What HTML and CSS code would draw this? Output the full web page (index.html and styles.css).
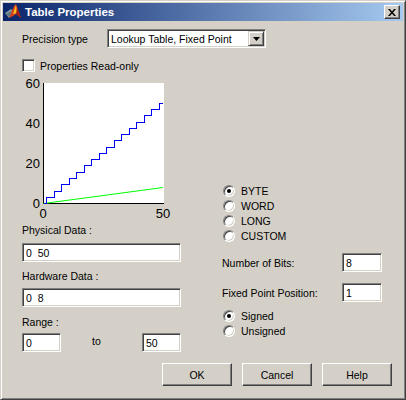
FILE: index.html
```html
<!DOCTYPE html>
<html>
<head>
<meta charset="utf-8">
<link rel="stylesheet" href="styles.css">
</head>
<body>
<div class="window">
  <div class="titlebar">
    <svg class="app-icon" width="16" height="16" viewBox="0 0 16 16">
      <polygon points="0,9 6,5 10,8 4,14" fill="#8a9aa0"/>
      <polygon points="1,10 6,7 8,9 4,13" fill="#5f7a86"/>
      <polygon points="4,14 9,2 11,0 16,14 11,10 8,12" fill="#d8401a"/>
      <polygon points="8,10 11,1 12,9" fill="#f8c020"/>
      <polygon points="11,10 12,4 16,14" fill="#a02010"/>
    </svg>
    <span class="title">Table Properties</span>
    <span class="close">
      <svg width="8" height="7" viewBox="0 0 8 7"><path d="M0 0h2l2 2.5 2-2.5h2L5 3.5 8 7H6L4 4.5 2 7H0l3-3.5z" fill="#000"/></svg>
    </span>
  </div>
  <div class="body">
    <div class="precision-row">
      <span class="precision-lbl">Precision type</span>
      <div class="combo">
        <span class="combo-text">Lookup Table, Fixed Point</span>
        <span class="combo-btn"><svg width="7" height="4" viewBox="0 0 7 4"><path d="M0 0h7L3.5 4z" fill="#000"/></svg></span>
      </div>
    </div>
    <div class="check-row"><span class="checkbox"></span><span class="check-text">Properties Read-only</span></div>
    <div class="main">
      <div class="left">
        <svg class="plot" width="150" height="145" viewBox="0 0 150 145">
          <rect x="21" y="8" width="121" height="121" fill="#fff"/>
          <path d="M21.5 8V129M21 128.5H142" stroke="#000" stroke-width="1" fill="none" shape-rendering="crispEdges"/>
          <polyline fill="none" stroke="#00ff00" stroke-width="1" points="21.5,128.5 141,112.5"/>
          <polyline fill="none" stroke="#0000ff" stroke-width="1" shape-rendering="crispEdges" points="21.5,128.5 24.5,128.5 24.5,122.5 32.5,122.5 32.5,116.5 39.5,116.5 39.5,109.5 47.5,109.5 47.5,103.5 54.5,103.5 54.5,97.5 62.5,97.5 62.5,90.5 69.5,90.5 69.5,84.5 77.5,84.5 77.5,78.5 84.5,78.5 84.5,72.5 92.5,72.5 92.5,65.5 99.5,65.5 99.5,59.5 107.5,59.5 107.5,53.5 114.5,53.5 114.5,47.5 122.5,47.5 122.5,40.5 129.5,40.5 129.5,34.5 137.5,34.5 137.5,28.5 141,28.5"/>
          <g class="ticks" text-anchor="end">
            <text x="18" y="13">60</text>
            <text x="18" y="53">40</text>
            <text x="18" y="93">20</text>
            <text x="18" y="133">0</text>
          </g>
          <g class="ticks" text-anchor="middle">
            <text x="21" y="143">0</text>
            <text x="141" y="143">50</text>
          </g>
        </svg>
        <div class="field-label first">Physical Data :</div>
        <div class="textbox wide gap-a">0  50</div>
        <div class="field-label gap-b">Hardware Data :</div>
        <div class="textbox wide gap-c">0  8</div>
        <div class="field-label gap-d">Range :</div>
        <div class="range-row">
          <div class="textbox small">0</div>
          <span class="to">to</span>
          <div class="textbox small push">50</div>
        </div>
      </div>
      <div class="right">
        <div class="radio-group size-group">
          <div class="radio-row"><span class="radio checked"></span><span class="radio-text">BYTE</span></div>
          <div class="radio-row"><span class="radio"></span><span class="radio-text">WORD</span></div>
          <div class="radio-row"><span class="radio"></span><span class="radio-text">LONG</span></div>
          <div class="radio-row"><span class="radio"></span><span class="radio-text">CUSTOM</span></div>
        </div>
        <div class="num-row bits-row">
          <span class="num-label">Number of Bits:</span>
          <div class="textbox num">8</div>
        </div>
        <div class="num-row fixed-row">
          <span class="num-label">Fixed Point Position:</span>
          <div class="textbox num">1</div>
        </div>
        <div class="radio-group sign-group">
          <div class="radio-row"><span class="radio checked"></span><span class="radio-text">Signed</span></div>
          <div class="radio-row"><span class="radio"></span><span class="radio-text">Unsigned</span></div>
        </div>
      </div>
    </div>
    <div class="buttons">
      <span class="btn">OK</span>
      <span class="btn">Cancel</span>
      <span class="btn">Help</span>
    </div>
  </div>
</div>
</body>
</html>
```
FILE: styles.css
```css
* { box-sizing: border-box; }
html, body { margin: 0; padding: 0; background: #d4d0c8; }
body { font-family: "Liberation Sans", Arial, sans-serif; font-size: 10.5px; color: #000; }

.window {
  width: 406px;
  height: 400px;
  background: #d4d0c8;
  border: 1px solid;
  border-color: #d4d0c8 #404040 #404040 #d4d0c8;
  box-shadow: inset 1px 1px 0 #fff, inset -1px -1px 0 #808080;
  padding: 2px;
  display: flex;
  flex-direction: column;
}

.titlebar {
  height: 18px;
  background: linear-gradient(to right, #0a246a, #a6caf0);
  display: flex;
  align-items: center;
  padding-left: 2px;
}
.app-icon { flex: none; }
.title {
  margin-left: 4px;
  color: #fff;
  font-weight: bold;
  font-size: 11.5px;
  font-family: "Liberation Sans", Arial, sans-serif;
}
.close {
  margin-left: auto;
  margin-right: 3px;
  width: 16px;
  height: 14px;
  background: #d4d0c8;
  border: 1px solid;
  border-color: #fff #404040 #404040 #fff;
  box-shadow: inset -1px -1px 0 #808080;
  display: flex;
  align-items: center;
  justify-content: center;
}

.body { padding: 8px 11px 0 19px; display: flex; flex-direction: column; }

.precision-row { display: flex; align-items: center; height: 19px; }
.precision-lbl { width: 85px; }
.combo {
  width: 159px;
  height: 19px;
  background: #fff;
  border: 1px solid;
  border-color: #808080 #fff #fff #808080;
  box-shadow: inset 1px 1px 0 #404040, inset -1px -1px 0 #d4d0c8;
  display: flex;
  align-items: center;
  padding: 1px 1px 1px 3px;
}
.combo-text { flex: 1; }
.combo-btn {
  width: 16px;
  height: 15px;
  background: #d4d0c8;
  border: 1px solid;
  border-color: #d4d0c8 #404040 #404040 #d4d0c8;
  box-shadow: inset 1px 1px 0 #fff, inset -1px -1px 0 #808080;
  display: flex;
  align-items: center;
  justify-content: center;
}

.check-row { display: flex; align-items: center; margin-top: 11px; height: 13px; }
.checkbox {
  width: 13px;
  height: 13px;
  background: #fff;
  border: 1px solid;
  border-color: #808080 #fff #fff #808080;
  box-shadow: inset 1px 1px 0 #404040, inset -1px -1px 0 #d4d0c8;
}
.check-text { margin-left: 5px; }

.main { display: flex; margin-top: 3px; }
.left { width: 159px; display: flex; flex-direction: column; }
.right { margin-left: 41px; display: flex; flex-direction: column; }

.plot { display: block; }
.ticks { font-family: "Liberation Sans", Arial, sans-serif; font-size: 13px; fill: #000; }

.field-label { height: 13px; line-height: 13px; }
.field-label.first { margin-top: 4px; }
.gap-a { margin-top: 6px; }
.gap-b { margin-top: 8px; }
.gap-c { margin-top: 5px; }
.gap-d { margin-top: 9px; }

.textbox {
  height: 19px;
  background: #fff;
  border: 1px solid;
  border-color: #808080 #fff #fff #808080;
  box-shadow: inset 1px 1px 0 #404040, inset -1px -1px 0 #d4d0c8;
  padding: 0 3px;
  display: flex;
  align-items: center;
  white-space: pre;
}
.textbox.wide { width: 159px; }
.textbox.small { width: 39px; }
.textbox.num { width: 40px; }

.range-row { display: flex; align-items: center; margin-top: 4px; }
.to { margin-left: 31px; margin-top: -3px; }
.push { margin-left: auto; }

.radio-group { display: flex; flex-direction: column; }
.size-group { margin-top: 108px; }
.sign-group { margin-top: 6px; }
.radio-row { display: flex; align-items: center; height: 15px; }
.radio {
  width: 12px;
  height: 12px;
  margin-left: 1px;
  border-radius: 50%;
  background: #fff;
  border: 1px solid;
  border-color: #808080 #fff #fff #808080;
  box-shadow: inset 1px 1px 0 #404040, inset -1px -1px 0 #d4d0c8;
  display: flex;
  align-items: center;
  justify-content: center;
}
.radio.checked::after {
  content: "";
  width: 4px;
  height: 4px;
  border-radius: 50%;
  background: #000;
}
.radio-text { margin-left: 6px; }

.num-row { display: flex; align-items: center; height: 19px; }
.bits-row { margin-top: 10px; }
.fixed-row { margin-top: 11px; }
.num-label { width: 120px; }

.buttons { display: flex; justify-content: flex-end; gap: 10px; margin-top: 11px; }
.btn {
  width: 70px;
  height: 23px;
  border: 1px solid;
  border-color: #fff #404040 #404040 #fff;
  box-shadow: inset -1px -1px 0 #808080;
  display: flex;
  align-items: center;
  justify-content: center;
}
```
